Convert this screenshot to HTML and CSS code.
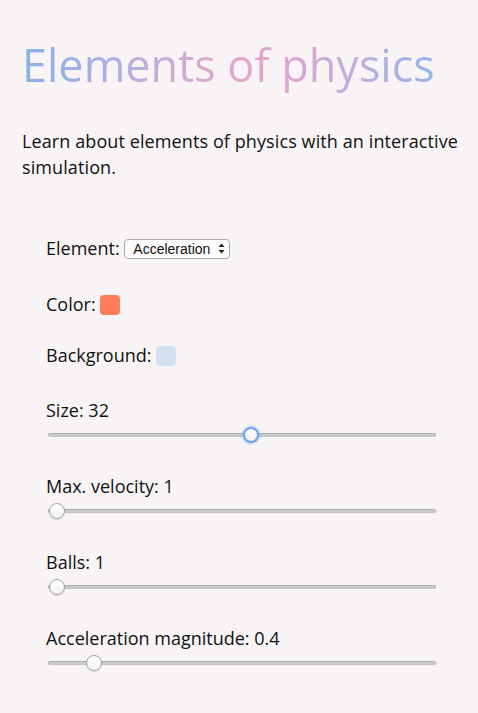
FILE: index.html
```html
<!DOCTYPE html>
<html lang="en">
<head>
<meta charset="utf-8">
<title>Elements of physics</title>
<link rel="stylesheet" href="styles.css">
</head>
<body>
<main class="page">
  <h1 class="title">Elements of physics</h1>
  <p class="intro">Learn about elements of physics with an interactive simulation.</p>
  <form class="controls">
    <div class="field field-element">
      <label class="label">Element:</label>
      <span class="select-wrap">
        <select class="select">
          <option>Acceleration</option>
        </select>
        <svg class="select-arrows" width="7" height="11" viewBox="0 0 7 11"><path d="M3.5 0.5 L6.5 4 L0.5 4 Z M3.5 10.5 L6.5 7 L0.5 7 Z" fill="#222"/></svg>
      </span>
    </div>
    <div class="field field-color">
      <label class="label">Color:</label>
      <span class="swatch swatch-coral"></span>
    </div>
    <div class="field field-bg">
      <label class="label">Background:</label>
      <span class="swatch swatch-blue"></span>
    </div>
    <div class="field slider-field">
      <label class="label">Size: 32</label>
      <input class="range focused" type="range" min="1" max="60" value="32">
    </div>
    <div class="field slider-field">
      <label class="label">Max. velocity: 1</label>
      <input class="range" type="range" min="1" max="10" value="1">
    </div>
    <div class="field slider-field">
      <label class="label">Balls: 1</label>
      <input class="range" type="range" min="1" max="20" value="1">
    </div>
    <div class="field slider-field">
      <label class="label">Acceleration magnitude: 0.4</label>
      <input class="range" type="range" min="0" max="4" step="0.1" value="0.4">
    </div>
  </form>
</main>
</body>
</html>
```

FILE: styles.css
```css
html, body {
  margin: 0;
  padding: 0;
  background: #f8f4f6;
}

body {
  font-family: "Open Sans", "DejaVu Sans", sans-serif;
  color: #111;
}

.page {
  padding: 36px 8px 20px 22px;
}

.title {
  margin: 0;
  font-size: 45px;
  line-height: 57px;
  font-weight: 400;
  display: inline-block;
  background: linear-gradient(90deg, #88b0e8 0%, #b8aedd 28%, #e6a6c8 52%, #d8a8d0 68%, #b6b0de 84%, #98b4e6 100%);
  -webkit-background-clip: text;
  background-clip: text;
  color: transparent;
}

.intro {
  margin: 35px 0 0;
  font-size: 18px;
  line-height: 26px;
  letter-spacing: 0.1px;
}

.controls {
  margin-top: 55px;
  padding-left: 24px;
}

.field {
  font-size: 18px;
  line-height: 26px;
}

.field-element { margin-bottom: 30px; }
.field-color { margin-bottom: 25px; }
.field-bg { margin-bottom: 29px; }
.slider-field { margin-bottom: 30px; }

.label {
  display: inline;
}

.select-wrap {
  position: relative;
  display: inline-block;
  vertical-align: 1px;
}

.select {
  -webkit-appearance: none;
  appearance: none;
  height: 20px;
  width: 106px;
  padding: 0 14px 0 8px;
  font-family: "Liberation Sans", Arial, sans-serif;
  font-size: 14px;
  color: #111;
  background: #fcfcfc;
  border: 1px solid #a9a9a9;
  border-radius: 4px;
  box-sizing: border-box;
  display: block;
}

.select-arrows {
  position: absolute;
  right: 5px;
  top: 4px;
  pointer-events: none;
}

.swatch {
  display: inline-block;
  width: 20px;
  height: 20px;
  border-radius: 4px;
  vertical-align: -4px;
}

.swatch-coral { background: #fe7c5a; }
.swatch-blue { background: #d4e0ef; }

.range {
  -webkit-appearance: none;
  appearance: none;
  display: block;
  width: 388px;
  height: 16px;
  margin: 4px 0 0 2px;
  padding: 0;
  background: transparent;
}

.range::-webkit-slider-runnable-track {
  height: 4px;
  border-radius: 3px;
  background: #cbcbcb;
  border: 1px solid #adadad;
  border-bottom-color: #c2c2c2;
}

.range::-webkit-slider-thumb {
  -webkit-appearance: none;
  appearance: none;
  width: 16px;
  height: 16px;
  margin-top: -7px;
  border-radius: 50%;
  box-sizing: border-box;
  background: linear-gradient(#ffffff, #f1f1f1);
  border: 1px solid #a5a5a5;
  box-shadow: 0 1px 1px rgba(0, 0, 0, 0.12);
}

.range.focused::-webkit-slider-thumb {
  border: 2px solid #6fa3ea;
  box-shadow: 0 0 2px 1px rgba(110, 160, 235, 0.6);
}
```
